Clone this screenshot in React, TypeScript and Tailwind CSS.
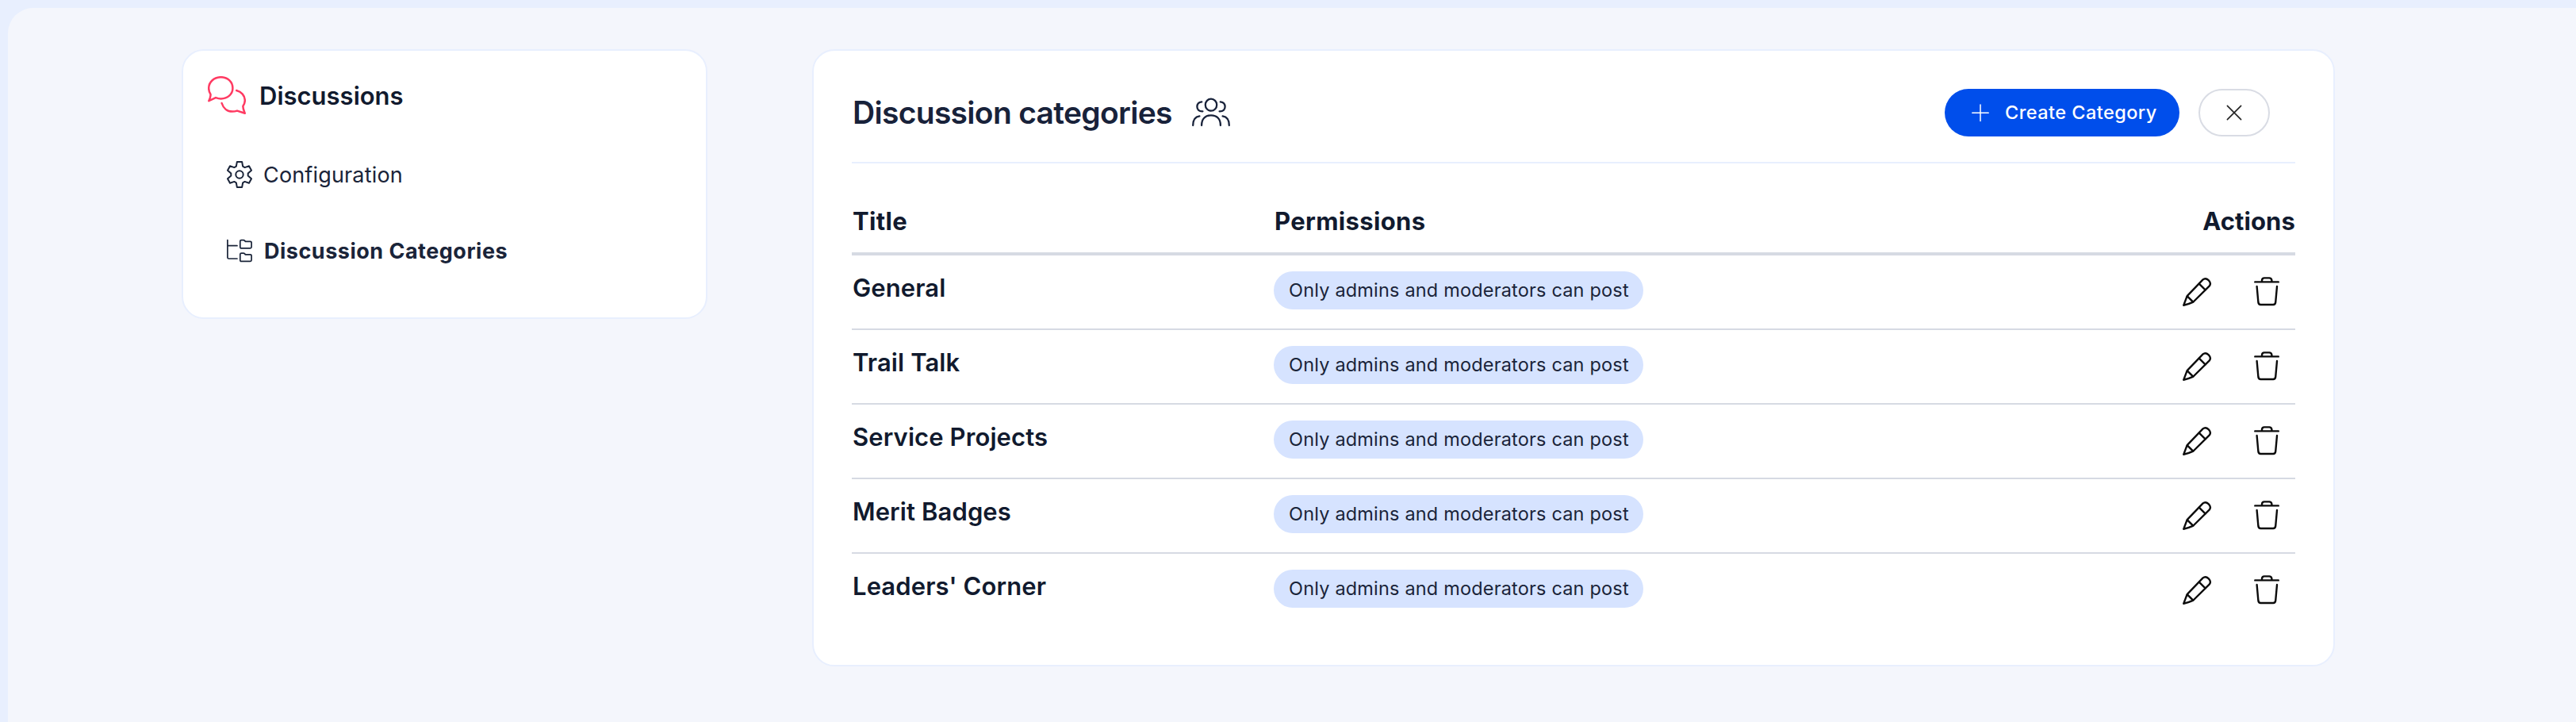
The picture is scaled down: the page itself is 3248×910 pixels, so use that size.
import React from 'react';

interface IconProps {
  className?: string;
}

const ChatIcon: React.FC<IconProps> = ({ className }) => (
  <svg viewBox="0 0 48 48" fill="none" stroke="currentColor" strokeWidth="2.5" strokeLinecap="round" strokeLinejoin="round" className={className}>
    <path d="M1.3 31.2C2.6 28.5 4 25 3.4 22.6C1.8 20 1.2 17.5 1.2 15.2C1.2 7.2 8 1.2 16.6 1.2C25 1.2 31.4 7.2 31.4 15C31.4 22.8 25 28.4 16.6 28.4C14.2 28.4 12 27.8 10 27.1Z" />
    <path d="M36.2 18C42.4 19.6 46.8 24.6 46.8 30.6C46.8 33.2 46 35.6 44.4 37.8C44.2 41 45.6 44 46.8 46.8L37 43.6C34.8 44.3 33 44.6 31 44.6C24.6 44.6 19.6 40.4 17.6 34" />
  </svg>
);

const GearIcon: React.FC<IconProps> = ({ className }) => (
  <svg viewBox="-16 -18 32 36" fill="none" stroke="currentColor" strokeWidth="2" strokeLinecap="round" strokeLinejoin="round" className={className}>
    <path d="M-4.2 -10.3L-3.1 -16.1H3.1L4.2 -10.3L6.6 -8.9L12 -10.7L15 -5.3L10.7 -1.4V1.4L15 5.3L12 10.7L6.6 8.9L4.2 10.3L3.1 16.1H-3.1L-4.2 10.3L-6.6 8.9L-12 10.7L-15 5.3L-10.7 1.4V-1.4L-15 -5.3L-12 -10.7L-6.6 -8.9Z" />
    <circle r="4.7" />
  </svg>
);

const FolderTreeIcon: React.FC<IconProps> = ({ className }) => (
  <svg viewBox="0 0 32 28" fill="none" stroke="currentColor" strokeWidth="1.7" strokeLinecap="round" strokeLinejoin="round" className={`overflow-visible ${className}`}>
    <path d="M0.9 0.6V22.4Q0.9 24 2.5 24H13M0.9 7.7H13" />
    <path d="M16.8 9.2V2Q16.8 0.6 18.4 0.6H21Q22 0.6 22.6 1.4L23.4 2.4H29.4Q31.1 2.4 31.1 4V9.3Q31.1 10.9 29.5 10.9H18.4Q16.8 10.9 16.8 9.2Z" />
    <path d="M16.8 25.7V18.5Q16.8 17.1 18.4 17.1H21Q22 17.1 22.6 17.9L23.4 18.9H29.4Q31.1 18.9 31.1 20.5V25.8Q31.1 27.4 29.5 27.4H18.4Q16.8 27.4 16.8 25.7Z" />
  </svg>
);

const PeopleIcon: React.FC<IconProps> = ({ className }) => (
  <svg viewBox="0 0 48 48" fill="none" stroke="currentColor" strokeWidth="2.3" strokeLinecap="round" className={className}>
    <ellipse cx="24" cy="14.2" rx="7.2" ry="7.5" />
    <path d="M12.1 40C12 32 16.4 27.4 24 27.4C31.6 27.4 36 32 35.9 40" />
    <path d="M12.2 10.4C8.6 10.8 6.4 13.4 6.4 16.6C6.4 20.2 8.8 22.6 13.4 22.4" />
    <path d="M35.8 10.4C39.4 10.8 41.6 13.4 41.6 16.6C41.6 20.2 39.2 22.6 34.6 22.4" />
    <path d="M1.2 40C1.2 33.4 4.2 29.2 9.4 28.4" />
    <path d="M46.8 40C46.8 33.4 43.8 29.2 38.6 28.4" />
  </svg>
);

const PlusIcon: React.FC<IconProps> = ({ className }) => (
  <svg viewBox="0 0 24 24" fill="none" stroke="currentColor" strokeWidth="1.5" strokeLinecap="round" className={className}>
    <path d="M12 2V22.4M1.8 12.2H22.2" />
  </svg>
);

const CloseIcon: React.FC<IconProps> = ({ className }) => (
  <svg viewBox="0 0 24 24" fill="none" stroke="currentColor" strokeWidth="1.6" strokeLinecap="round" className={className}>
    <path d="M3.4 3.4L20.6 20.6M20.6 3.4L3.4 20.6" />
  </svg>
);

const PencilIcon: React.FC<IconProps> = ({ className }) => (
  <svg viewBox="0 0 40 40" fill="none" stroke="currentColor" strokeWidth="2.4" strokeLinecap="round" strokeLinejoin="round" className={className}>
    <path d="M3.3 36.7L7.2 26.3Q7.8 25 8.6 24.2L27.6 4.4Q31 1.6 34.6 5.2L35.2 5.8Q38.4 9.4 35.6 12.6L16 32Q15.2 32.7 14.2 33.1Q9 35.6 3.3 36.7Z" />
    <path d="M7.9 25.3L15 32.4M22.8 9.6L30.6 17.4" />
  </svg>
);

const TrashIcon: React.FC<IconProps> = ({ className }) => (
  <svg viewBox="0 0 40 40" fill="none" stroke="currentColor" strokeWidth="2.4" strokeLinecap="round" strokeLinejoin="round" className={className}>
    <path d="M5.3 7.4H34.8M14 7.4V5.4Q14.2 2.4 17 2.4H23.2Q26 2.4 26.4 5.4V7.4" />
    <path d="M7.6 13L9.4 33Q9.8 36 12.4 36H28.2Q30.8 36 31.2 33L33 13" />
  </svg>
);

const CATEGORIES = [
  { id: 'general', title: 'General' },
  { id: 'trail-talk', title: 'Trail Talk' },
  { id: 'service-projects', title: 'Service Projects' },
  { id: 'merit-badges', title: 'Merit Badges' },
  { id: 'leaders-corner', title: "Leaders' Corner" },
];

const Sidebar: React.FC = () => (
  <aside className="w-[663px] shrink-0 rounded-[28px] border-2 border-[#e8effe] bg-white pt-8 pb-[60px] pl-[31px]">
    <div className="flex h-12 items-center gap-[17px]">
      <ChatIcon className="h-12 w-12 text-[#ff3a62]" />
      <h2 className="pt-0.5 text-[31px] leading-[48px] font-semibold text-[#111a2e]">Discussions</h2>
    </div>
    <nav className="mt-[52px] flex flex-col gap-12 pl-6 text-[27px] leading-10 text-[#1a2439]">
      <a className="flex h-12 items-center gap-3.5">
        <GearIcon className="h-9 w-8" />
        <span className="pt-0.5 tracking-[0.16px]">Configuration</span>
      </a>
      <a className="flex h-12 items-center gap-[15px]">
        <FolderTreeIcon className="h-7 w-8" />
        <span className="pt-0.5 font-bold tracking-[0.5px]">Discussion Categories</span>
      </a>
    </nav>
  </aside>
);

const CategoryTable: React.FC = () => (
  <div>
    <div className="flex h-[116px] border-b-4 border-[#d6dae3] pt-[53px] text-[31px] leading-10 font-bold text-[#111a2e]">
      <div className="w-[532px] pl-px tracking-[0.35px]">Title</div>
      <div className="flex-1 pl-px tracking-[0.35px]">Permissions</div>
      <div className="tracking-[0.1px]">Actions</div>
    </div>
    <div className="divide-y-2 divide-[#d6dae3]">
      {CATEGORIES.map((category) => (
        <div key={category.id} className="flex items-start">
          <div className="w-[532px] pt-[21px] pl-px text-[31px] leading-10 font-semibold tracking-[0.1px] text-[#111a2e]">
            {category.title}
          </div>
          <div className="flex flex-1 pt-5 pb-6">
            <span className="h-12 w-[466px] rounded-full bg-[#d6e3ff] pl-[19px] text-[23.5px] leading-[48px] tracking-[0.18px] whitespace-nowrap text-[#1a2439]">
              Only admins and moderators can post
            </span>
          </div>
          <div className="flex gap-12 pt-[26px] pr-4 text-[#0c0c0c]">
            <button>
              <PencilIcon className="h-10 w-10" />
            </button>
            <button>
              <TrashIcon className="h-10 w-10" />
            </button>
          </div>
        </div>
      ))}
    </div>
  </div>
);

export default function App() {
  return (
    <div className="h-[910px] w-[3248px] overflow-hidden bg-[#e8effe] pt-2.5 pl-2.5 font-[Inter,sans-serif]">
      <div className="flex h-full items-start gap-[132px] rounded-tl-[32px] bg-[#f4f6fc] pt-[52px] pl-[219px]">
        <Sidebar />
        <main className="w-[1920px] shrink-0 rounded-[28px] border-2 border-[#e8effe] bg-white p-12">
          <header className="flex items-center border-b-2 border-[#e8effe] pb-8">
            <h1 className="pl-px text-[39px] leading-[48px] font-semibold tracking-[-0.7px] text-[#18223a]">
              Discussion categories
            </h1>
            <PeopleIcon className="ml-[25px] h-12 w-12 text-[#18223a]" />
            <div className="mr-8 ml-auto flex gap-6">
              <button className="flex h-[60px] w-[296px] items-center gap-[19px] rounded-full bg-[#004eeb] pl-[33px] text-[23.5px] leading-[60px] font-[450] tracking-[0.45px] whitespace-nowrap text-white">
                <PlusIcon className="h-6 w-6 shrink-0" />
                Create Category
              </button>
              <button className="flex h-[60px] w-[90px] items-center justify-center rounded-full border-2 border-[#d9dce4] text-[#222]">
                <CloseIcon className="h-6 w-6" />
              </button>
            </div>
          </header>
          <CategoryTable />
        </main>
      </div>
    </div>
  );
}
